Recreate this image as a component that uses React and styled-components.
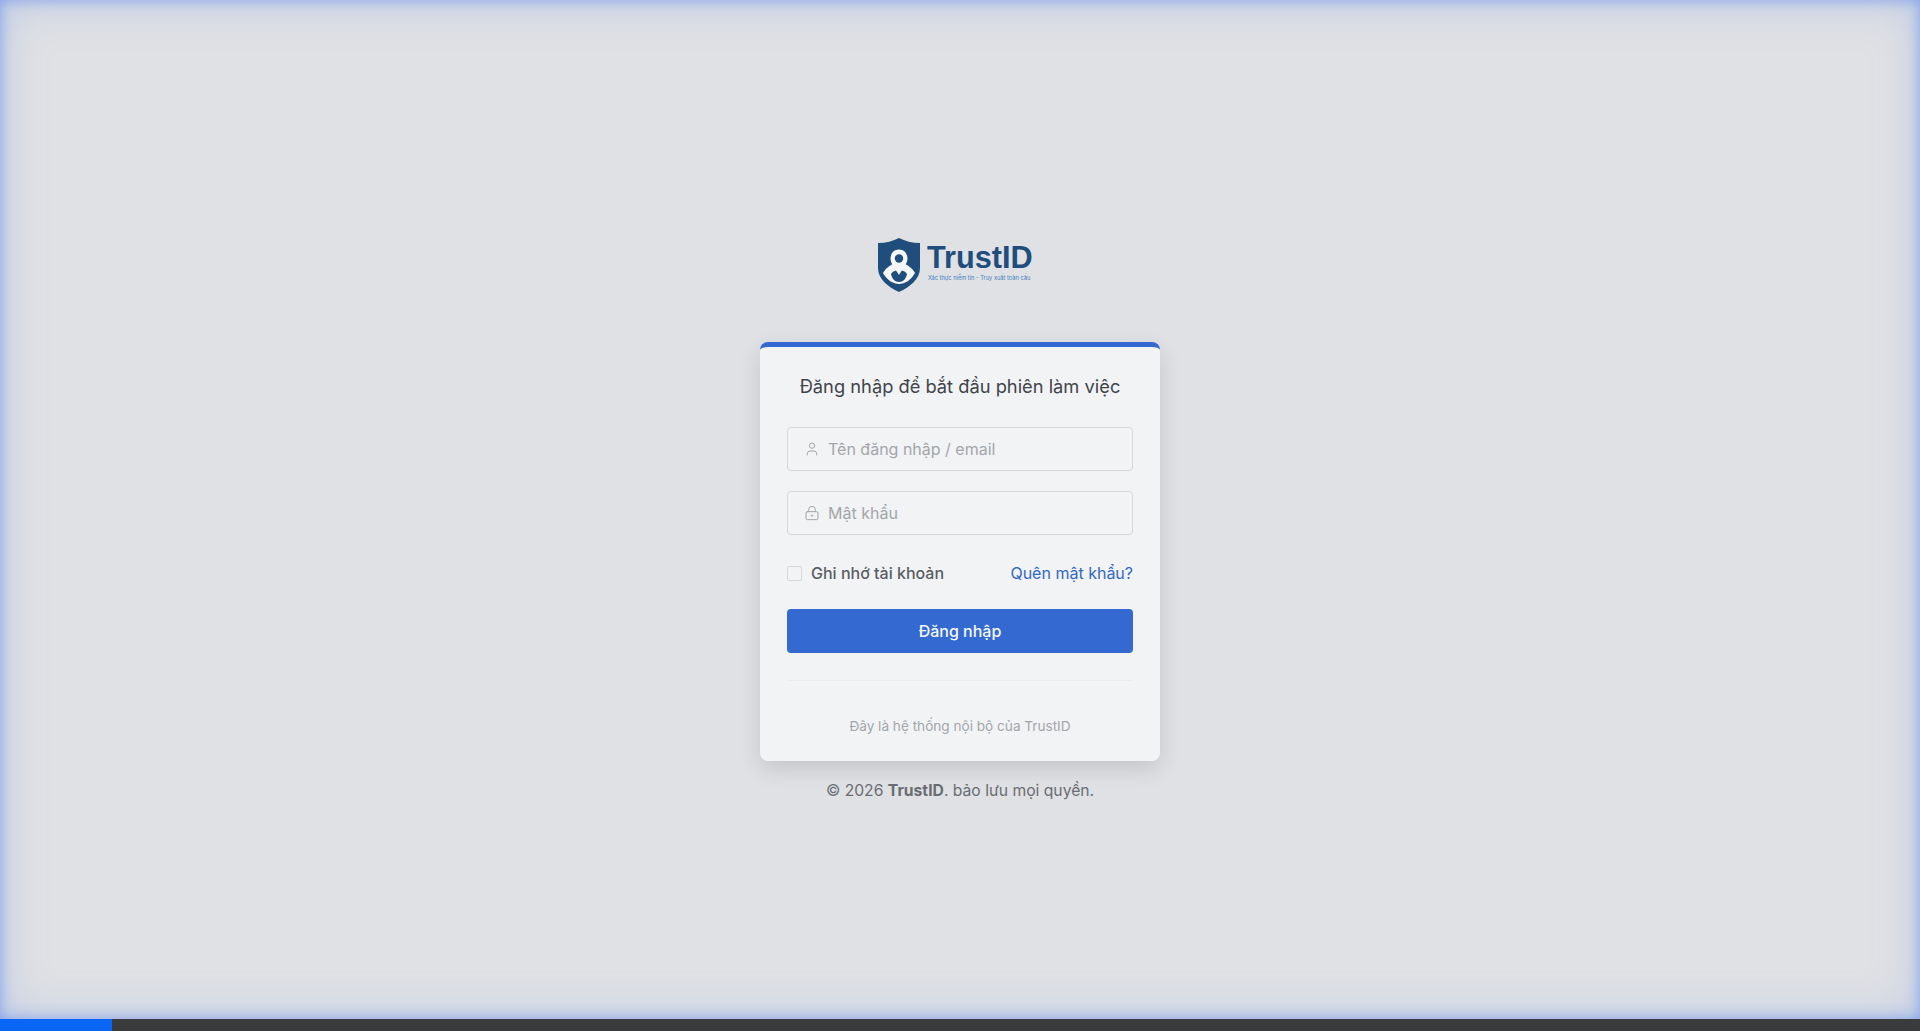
import styled, { createGlobalStyle } from "styled-components";
import { User, LockKeyhole } from "lucide-react";

const GlobalStyle = createGlobalStyle`
    html, body {
        margin: 0;
        padding: 0;
        height: 100%;
    }
    body {
        font-family: "Inter", "Noto Sans", "Liberation Sans", sans-serif;
        background: #e0e1e4;
        overflow: hidden;
    }
`;

const Shield = () => (
    <svg width="42" height="54" viewBox="0 0 42 54">
        <path
            d="M21 0 C27 3 34 5 42 5 L42 30 C42 41 32 49 21 54 C10 49 0 41 0 30 L0 5 C8 5 15 3 21 0 Z"
            fill="#1f4e7d"
        />
        <path
            d="M5 35 C8 30 11 28 15 26 L27 26 C31 28 34 30 37 35 C33 42 27 46 21 46 C15 46 9 42 5 35 Z"
            fill="#f4f6f8"
        />
        <path
            d="M13 36 C15 33 18 32 21 32 C24 32 27 33 29 36 C28 41 25 44 21 44 C17 44 14 41 13 36 Z"
            fill="#1f4e7d"
        />
        <path
            d="M21 11.5 C15.8 11.5 12.5 15.6 12.5 20.5 C12.5 26 17.5 31 21 37 C24.5 31 29.5 26 29.5 20.5 C29.5 15.6 26.2 11.5 21 11.5 Z"
            fill="#f4f6f8"
        />
        <circle cx="21" cy="20.5" r="4.2" fill="#1f4e7d" />
    </svg>
);

const App = () => {
    return (
        <Page>
            <GlobalStyle />
            <Main>
                <Logo>
                    <Shield />
                    <Brand>
                        <BrandName>TrustID</BrandName>
                        <Tagline>Xác thực niềm tin - Truy xuất toàn cầu</Tagline>
                    </Brand>
                </Logo>
                <Card>
                    <Title>Đăng nhập để bắt đầu phiên làm việc</Title>
                    <Field>
                        <User size={16} strokeWidth={1.5} />
                        <Input type="text" placeholder="Tên đăng nhập / email" />
                    </Field>
                    <Field>
                        <LockKeyhole size={16} strokeWidth={1.5} />
                        <Input type="password" placeholder="Mật khẩu" />
                    </Field>
                    <Options>
                        <Remember>
                            <Checkbox type="checkbox" />
                            Ghi nhớ tài khoản
                        </Remember>
                        <Forgot href="#">Quên mật khẩu?</Forgot>
                    </Options>
                    <Submit type="button">Đăng nhập</Submit>
                    <Divider />
                    <Note>Đây là hệ thống nội bộ của TrustID</Note>
                </Card>
                <Copyright>
                    © 2026 <strong>TrustID</strong>. bảo lưu mọi quyền.
                </Copyright>
            </Main>
            <Progress>
                <ProgressFill />
            </Progress>
        </Page>
    );
};

const Page = styled.div`
    height: 1031px;
    display: flex;
    flex-direction: column;
`;

const Main = styled.main`
    flex: 1;
    display: flex;
    flex-direction: column;
    align-items: center;
    padding-top: 238px;
    box-sizing: border-box;
    background: #e0e1e4;
    box-shadow: inset 0 0 14px rgba(70, 115, 240, 0.5), inset 0 0 48px rgba(85, 135, 240, 0.28);
`;

const Logo = styled.div`
    display: flex;
    align-items: flex-start;
    gap: 7px;
    width: 164px;
    height: 54px;
`;

const Brand = styled.div`
    display: flex;
    flex-direction: column;
`;

const BrandName = styled.div`
    font-family: "Liberation Sans", Arial, sans-serif;
    font-weight: 700;
    font-size: 30.7px;
    line-height: 34px;
    color: #1f4e7d;
    margin-top: 3px;
`;

const Tagline = styled.div`
    font-size: 5.7px;
    line-height: 8px;
    color: #3f7fc0;
    margin: -1px 0 0 1px;
    white-space: nowrap;
`;

const Card = styled.section`
    width: 400px;
    height: 419px;
    box-sizing: border-box;
    margin-top: 50px;
    padding: 0 27px;
    display: flex;
    flex-direction: column;
    background: #f2f3f4;
    border-top: 5px solid #3369d0;
    border-radius: 8px;
    box-shadow: 0 8px 22px rgba(0, 0, 0, 0.12);
`;

const Title = styled.h1`
    margin: 27px 0 29px;
    font-size: 18.3px;
    line-height: 24px;
    font-weight: 400;
    text-align: center;
    color: #3f444b;
    white-space: nowrap;
`;

const Field = styled.label`
    height: 44px;
    box-sizing: border-box;
    display: flex;
    align-items: center;
    gap: 8px;
    padding: 0 16px;
    margin-bottom: 20px;
    border: 1px solid #d5d7da;
    border-radius: 4px;
    color: #a3a6ab;
`;

const Input = styled.input`
    flex: 1;
    min-width: 0;
    border: 0;
    outline: 0;
    padding: 0;
    background: transparent;
    font: inherit;
    font-size: 16px;
    color: #3f444b;
    &::placeholder {
        color: #a3a6ab;
        opacity: 1;
    }
`;

const Options = styled.div`
    display: flex;
    align-items: center;
    justify-content: space-between;
    height: 24px;
    margin-top: 6px;
    font-size: 16px;
`;

const Remember = styled.label`
    display: flex;
    align-items: center;
    gap: 9px;
    font-weight: 450;
    color: #5a5e64;
`;

const Checkbox = styled.input`
    appearance: none;
    width: 15px;
    height: 15px;
    margin: 0;
    border: 1px solid #d5d7da;
    border-radius: 2px;
    background: #f2f3f4;
`;

const Forgot = styled.a`
    color: #3369c4;
    text-decoration: none;
`;

const Submit = styled.button`
    height: 44px;
    margin-top: 24px;
    border: 0;
    border-radius: 4px;
    background: #3369d0;
    color: #f5f7fb;
    font: inherit;
    font-size: 16px;
    font-weight: 450;
`;

const Divider = styled.div`
    height: 1px;
    margin-top: 27px;
    background: #ebecee;
`;

const Note = styled.p`
    margin: 36px 0 0;
    font-size: 13.6px;
    line-height: 18px;
    text-align: center;
    color: #a3a6ab;
`;

const Copyright = styled.p`
    margin: 19px 0 0;
    font-size: 15.7px;
    line-height: 22px;
    color: #696d73;
    strong {
        font-weight: 700;
    }
`;

const Progress = styled.div`
    height: 12px;
    background: #3a3b3d;
`;

const ProgressFill = styled.div`
    width: 112px;
    height: 100%;
    background: #0a66f5;
`;

export default App;
